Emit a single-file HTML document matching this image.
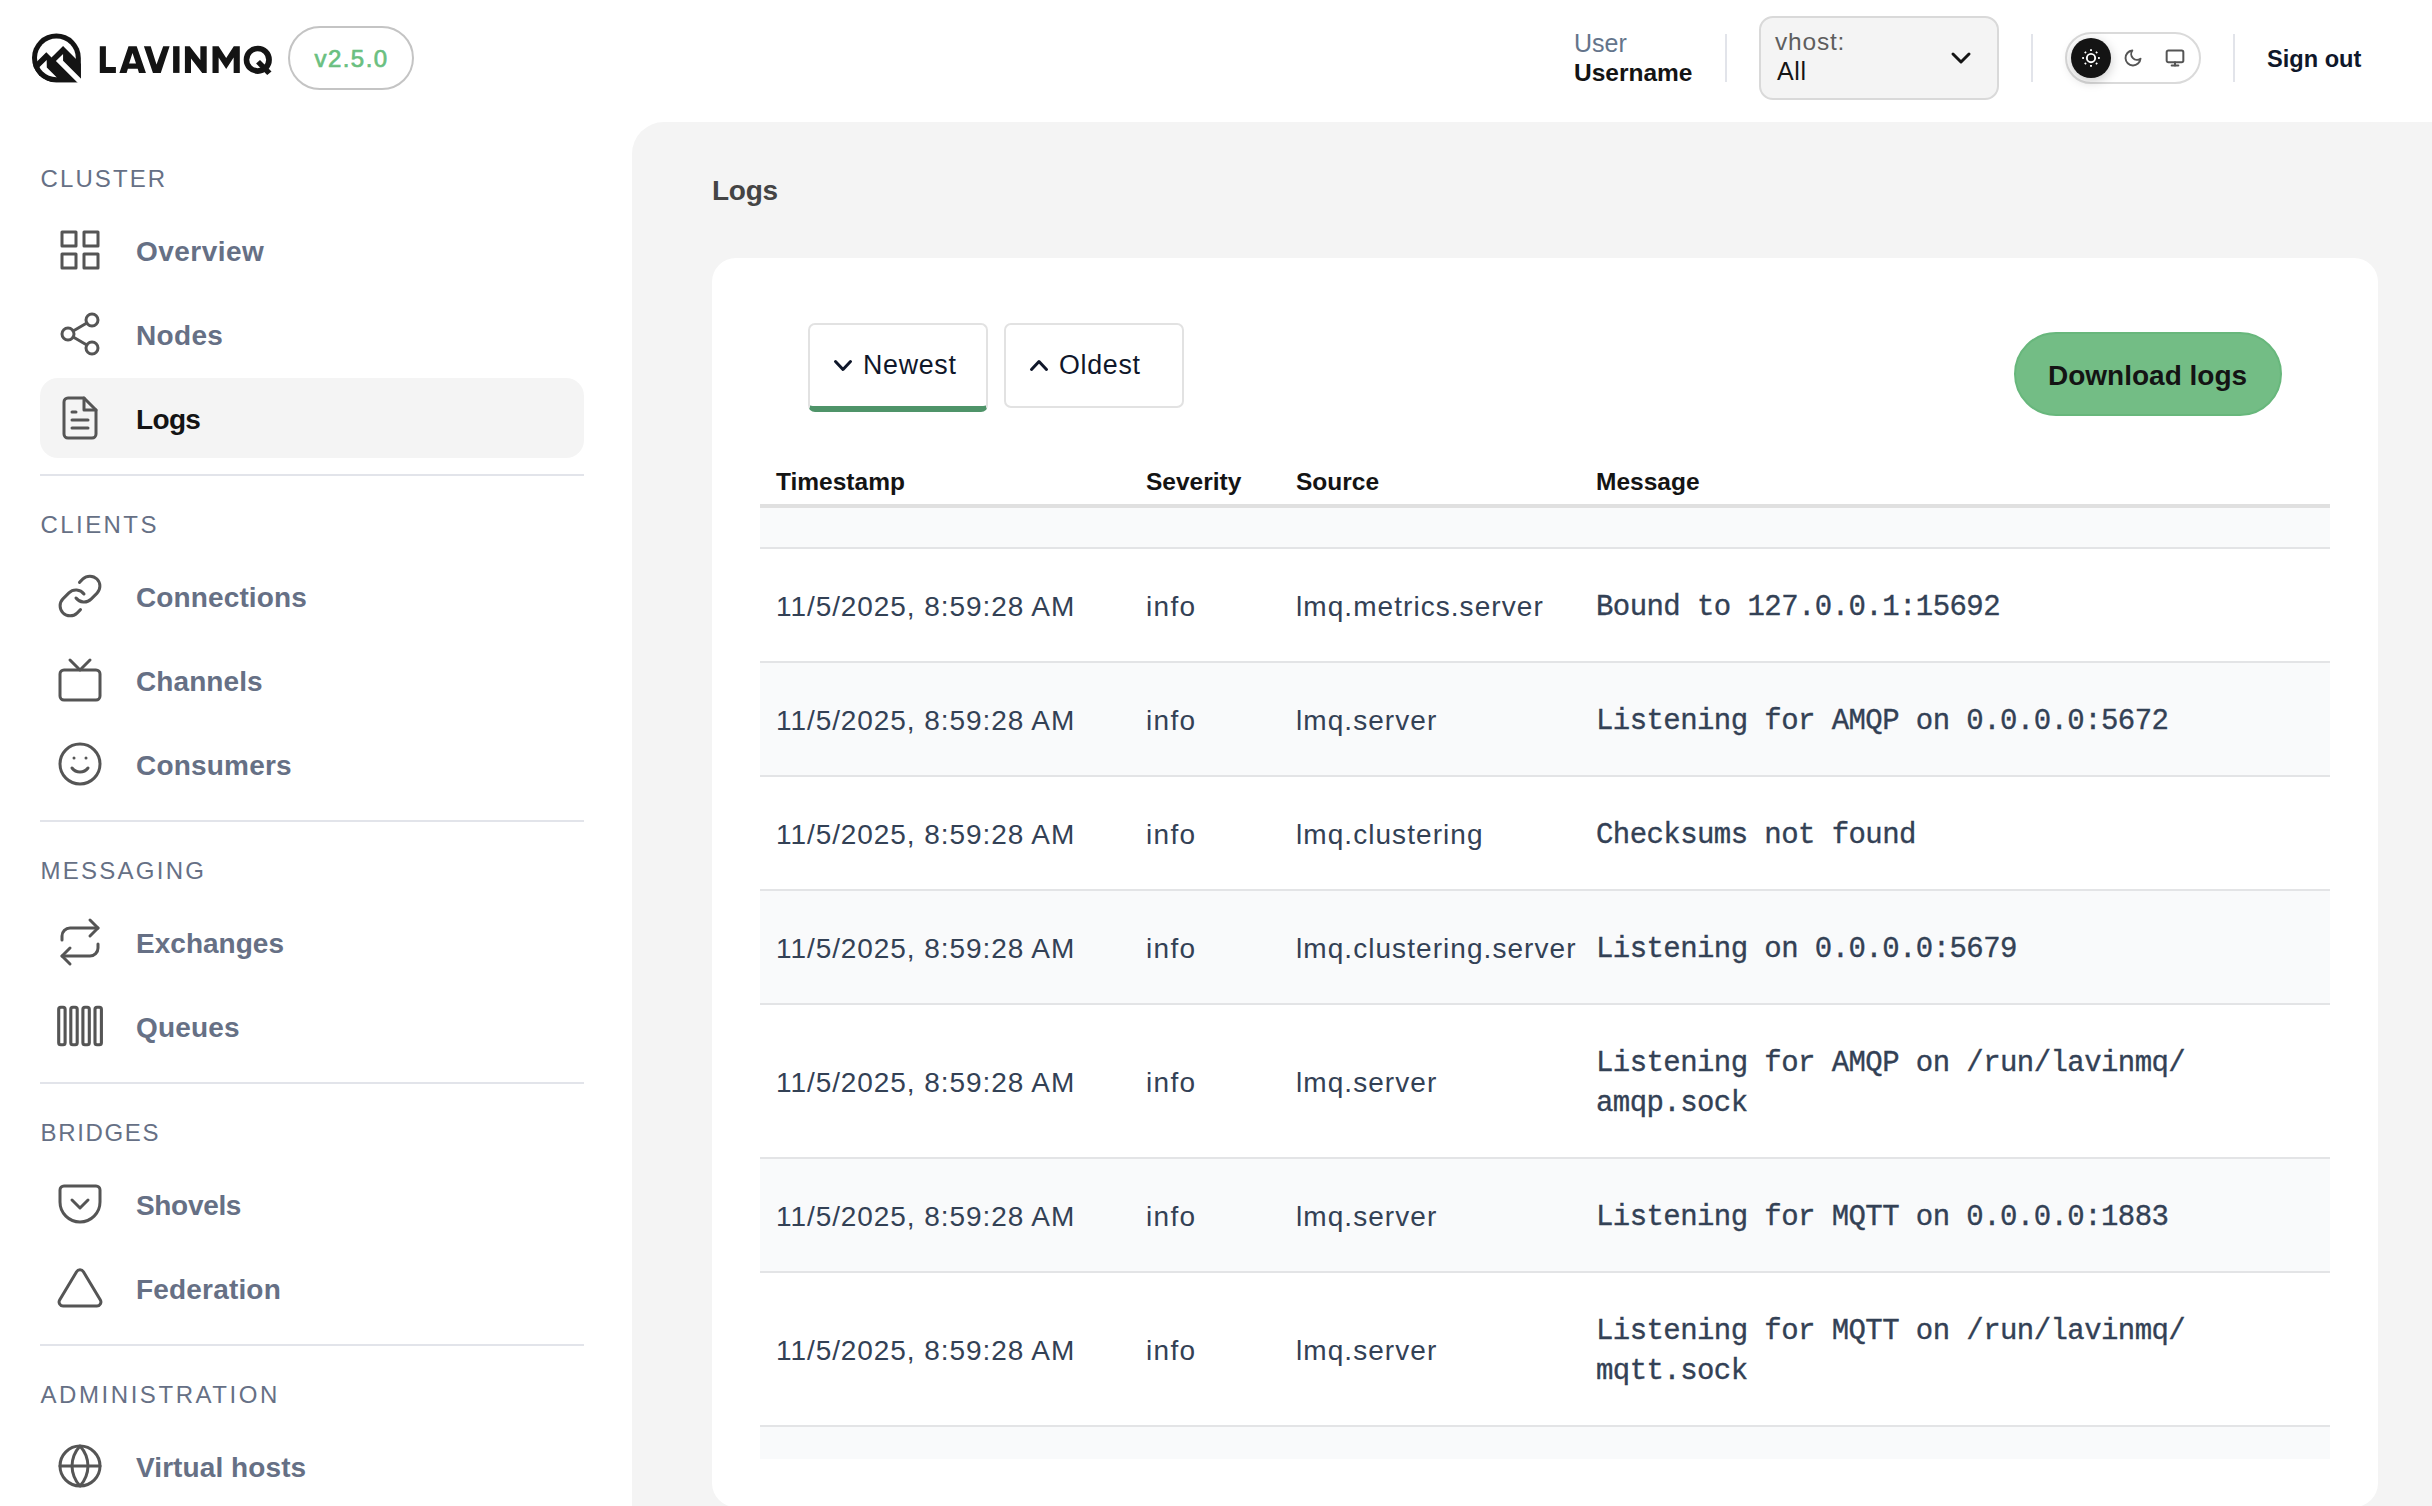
<!DOCTYPE html>
<html lang="en">
<head>
<meta charset="utf-8">
<title>LavinMQ - Logs</title>
<style>
*{box-sizing:border-box;margin:0;padding:0}
html,body{width:2432px;height:1506px;overflow:hidden;background:#fff}
body{font-family:"Liberation Sans",sans-serif;color:#141414;position:relative}
.abs{position:absolute}
.t{position:absolute;white-space:nowrap;line-height:1}
svg{position:absolute;overflow:visible}
.ico{fill:none;stroke:#555;stroke-width:1.5;stroke-linecap:round;stroke-linejoin:round;width:48px;height:48px;left:56px}
.sec{position:absolute;left:40.5px;font-size:24px;letter-spacing:2.1px;color:#667085;line-height:1;white-space:nowrap}
.nav{position:absolute;left:136px;font-size:28px;font-weight:bold;color:#667085;line-height:1;white-space:nowrap;letter-spacing:.45px}
.hr{position:absolute;left:40px;width:544px;height:2px;background:#e2e4ea}
.vsep{position:absolute;top:34px;width:2px;height:48px;background:#e2e4ea}
/* table */
.row{position:absolute;left:760px;width:1570px;border-bottom:2px solid #e3e4e6}
.row.alt{background:#f9fafb}
.c{position:absolute;font-size:28px;color:#334155;line-height:40px;white-space:nowrap}
.c1{left:16px;letter-spacing:.93px}
.c2{left:386px;letter-spacing:1.3px}
.c3{left:536px;letter-spacing:1.06px}
.c4{left:836px;font-family:"Liberation Mono",monospace;font-size:29px;letter-spacing:-.57px;-webkit-text-stroke:.35px #334155;margin-top:.5px}
.th{position:absolute;top:469.500px;font-size:24.500px;font-weight:bold;color:#141414;line-height:1;white-space:nowrap}
</style>
</head>
<body>

<!-- ================= HEADER ================= -->
<svg id="logo" style="left:30px;top:30px;width:60px;height:60px" viewBox="30 30 60 60">
  <defs>
    <clipPath id="outerclip"><path d="M32 57.9A24.4 24.4 0 0 1 80.800 57.9V82.300H56.400A24.400 24.400 0 0 1 32 57.900Z"/></clipPath>
    <clipPath id="innerclip"><circle cx="56.400" cy="57.900" r="19.400"/></clipPath>
  </defs>
  <path d="M32 57.900A24.400 24.400 0 0 1 80.800 57.900V82.300H56.400A24.400 24.400 0 0 1 32 57.900Z" fill="#141414"/>
  <circle cx="56.400" cy="57.900" r="19.400" fill="#fff"/>
  <g clip-path="url(#outerclip)">
    <polygon points="30,68.600 46.300,52.300 51.500,57.500 63.070,46.100 83,66 83,90 30,90" fill="#141414"/>
  </g>
  <g clip-path="url(#innerclip)">
    <polygon points="46.700,59.900 26.700,79.900 26.700,100 79.400,100 46.800,67.500" fill="#fff"/>
  </g>
  <polygon points="63.070,53.900 55.900,61 85.900,91 93.070,90.700 63.070,60.700" fill="#fff"/>
</svg>
<svg id="wordmark" style="left:96px;top:40px;width:184px;height:40px" viewBox="96 40 184 40" fill="#141414">
  <polygon points="99.800,46.200 105.900,46.200 105.900,67.050 115.900,67.050 115.900,72.900 99.800,72.900"/>
  <path fill-rule="evenodd" d="M128.500 46.200H136.700L145.960 72.900H138.970L137.700 68.800H127.900L126.600 72.900H119.400ZM132.500 53.100L129.100 63.400H136ZZ"/>
  <polygon points="143.900,46.200 150.700,46.200 156.500,64.500 163.200,46.200 169.600,46.200 160.760,72.900 152.950,72.900"/>
  <rect x="173.100" y="46.200" width="6.400" height="26.700"/>
  <polygon points="184.900,46.200 189.700,46.200 200.350,60.100 200.350,46.200 206.700,46.200 206.700,72.900 202.200,72.900 191,58.500 191,72.900 184.900,72.900"/>
  <polygon points="212.500,72.900 212.500,46.200 218.600,46.200 226.200,57.900 233.800,46.200 239.800,46.200 239.800,72.900 233.660,72.900 233.660,57.500 226.200,68.900 218.650,57.500 218.650,72.900"/>
  <path fill-rule="evenodd" d="M257.800 45.700a14.100 14.100 0 1 0 0 28.200a14.100 14.100 0 1 0 0-28.200ZM257.700 51.300a8.450 8.450 0 1 1 0 16.900a8.450 8.450 0 1 1 0-16.900Z"/>
  <polygon points="260,59.900 256.100,63.400 267.200,74.950 271.500,71.500"/>
</svg>

<div class="abs" style="left:288px;top:26px;width:126px;height:64px;border:2px solid #c4c4c4;border-radius:32px"></div>
<div class="t" style="left:314.600px;top:46.600px;font-size:24px;letter-spacing:1.420px;color:#6abf80;-webkit-text-stroke:.7px #6abf80">v2.5.0</div>

<div class="t" style="left:1574px;top:30.800px;font-size:25px;color:#64748b">User</div>
<div class="t" style="left:1574px;top:61.200px;font-size:24.500px;font-weight:bold;color:#141414">Username</div>
<div class="vsep" style="left:1725px"></div>

<div class="abs" style="left:1759px;top:16px;width:240px;height:84px;background:#f4f4f4;border:2px solid #d9d9d9;border-radius:14px"></div>
<div class="t" style="left:1775px;top:30px;font-size:24.500px;color:#5e5e5e;letter-spacing:.8px">vhost:</div>
<div class="t" style="left:1777px;top:58.500px;font-size:25px;color:#141414;letter-spacing:.6px">All</div>
<svg style="left:1949px;top:46px;width:24px;height:24px" viewBox="0 0 24 24" fill="none" stroke="#141414" stroke-width="3" stroke-linecap="round" stroke-linejoin="round"><polyline points="4,8 12,16 20,8"/></svg>
<div class="vsep" style="left:2031px"></div>

<!-- theme toggle -->
<div class="abs" style="left:2065px;top:32px;width:136px;height:52px;border:2px solid #dadada;border-radius:26px;"></div>
<div class="abs" style="left:2071px;top:38px;width:40px;height:40px;border-radius:50%;background:#141414;box-shadow:0 3px 12px rgba(0,0,0,.22)"></div>
<svg style="left:2081px;top:48px;width:20px;height:20px" viewBox="0 0 24 24" fill="none" stroke="#fff" stroke-width="2.300" stroke-linecap="butt" stroke-linejoin="round"><circle cx="12" cy="12" r="5"/><line x1="12" y1="1.500" x2="12" y2="3.500"/><line x1="12" y1="20.500" x2="12" y2="22.500"/><line x1="4.600" y1="4.600" x2="6" y2="6"/><line x1="18" y1="18" x2="19.400" y2="19.400"/><line x1="1.500" y1="12" x2="3.500" y2="12"/><line x1="20.500" y1="12" x2="22.500" y2="12"/><line x1="4.600" y1="19.400" x2="6" y2="18"/><line x1="18" y1="6" x2="19.400" y2="4.600"/></svg>
<svg style="left:2123px;top:48px;width:20px;height:20px" viewBox="0 0 24 24" fill="none" stroke="#555" stroke-width="2.300" stroke-linecap="round" stroke-linejoin="round"><path d="M21 12.790A9 9 0 1 1 11.210 3 7 7 0 0 0 21 12.790z"/></svg>
<svg style="left:2165px;top:48px;width:20px;height:20px" viewBox="0 0 24 24" fill="none" stroke="#555" stroke-width="2.400" stroke-linecap="round" stroke-linejoin="round"><rect x="2" y="3" width="20" height="14" rx="2" ry="2"/><line x1="8" y1="21" x2="16" y2="21"/><line x1="12" y1="17" x2="12" y2="21"/></svg>
<div class="vsep" style="left:2233px"></div>
<div class="t" style="left:2267px;top:48px;font-size:23.600px;font-weight:bold;color:#0f172a">Sign out</div>

<!-- ================= SIDEBAR ================= -->
<div id="sidebar">
<div class="sec" style="top:167.3px;letter-spacing:2.1px">CLUSTER</div>
<svg class="ico" style="top:225.6px" viewBox="0 0 24 24"><rect x="3" y="3" width="7" height="7"/><rect x="14" y="3" width="7" height="7"/><rect x="14" y="14" width="7" height="7"/><rect x="3" y="14" width="7" height="7"/></svg>
<div class="nav" style="top:238px;letter-spacing:0.46px">Overview</div>
<svg class="ico" style="top:309.6px" viewBox="0 0 24 24"><circle cx="18" cy="5" r="3"/><circle cx="6" cy="12" r="3"/><circle cx="18" cy="19" r="3"/><line x1="8.590" y1="13.510" x2="15.420" y2="17.490"/><line x1="15.410" y1="6.510" x2="8.590" y2="10.490"/></svg>
<div class="nav" style="top:322px;letter-spacing:0.32px">Nodes</div>
<div class="abs" style="left:40px;top:378px;width:544px;height:80px;background:#f4f4f4;border-radius:18px"></div>
<svg class="ico" style="top:393.6px" viewBox="0 0 24 24"><path d="M14 2H6a2 2 0 0 0-2 2v16a2 2 0 0 0 2 2h12a2 2 0 0 0 2-2V8z"/><polyline points="14 2 14 8 20 8"/><line x1="16" y1="13" x2="8" y2="13"/><line x1="16" y1="17" x2="8" y2="17"/><polyline points="10 9 9 9 8 9"/></svg>
<div class="nav" style="top:406px;color:#141414;letter-spacing:-0.65px">Logs</div>
<div class="hr" style="top:474px"></div>

<div class="sec" style="top:513.3px;letter-spacing:2.43px">CLIENTS</div>
<svg class="ico" style="top:571.5px" viewBox="0 0 24 24"><path d="M10 13a5 5 0 0 0 7.540.540l3-3a5 5 0 0 0-7.070-7.070l-1.720 1.710"/><path d="M14 11a5 5 0 0 0-7.540-.540l-3 3a5 5 0 0 0 7.070 7.070l1.710-1.710"/></svg>
<div class="nav" style="top:583.7px;letter-spacing:0.12px">Connections</div>
<svg class="ico" style="top:655.5px" viewBox="0 0 24 24"><rect x="2" y="7" width="20" height="15" rx="2" ry="2"/><polyline points="17 2 12 7 7 2"/></svg>
<div class="nav" style="top:667.7px;letter-spacing:0.09px">Channels</div>
<svg class="ico" style="top:739.5px" viewBox="0 0 24 24"><circle cx="12" cy="12" r="10"/><path d="M8 14s1.500 2 4 2 4-2 4-2"/><line x1="9" y1="9" x2="9.010" y2="9"/><line x1="15" y1="9" x2="15.010" y2="9"/></svg>
<div class="nav" style="top:751.7px;letter-spacing:0.19px">Consumers</div>
<div class="hr" style="top:820px"></div>

<div class="sec" style="top:859.3px;letter-spacing:2.26px">MESSAGING</div>
<svg class="ico" style="top:917.5px" viewBox="0 0 24 24"><polyline points="17 1 21 5 17 9"/><path d="M3 11V9a4 4 0 0 1 4-4h14"/><polyline points="7 23 3 19 7 15"/><path d="M21 13v2a4 4 0 0 1-4 4H3"/></svg>
<div class="nav" style="top:929.7px;letter-spacing:0.02px">Exchanges</div>
<svg class="ico" style="top:1001.5px;stroke-width:1.55" viewBox="0 0 24 24"><rect x="1.350" y="2.650" width="3.200" height="18.700" rx="1"/><rect x="7.400" y="2.650" width="3.200" height="18.700" rx="1"/><rect x="13.450" y="2.650" width="3.200" height="18.700" rx="1"/><rect x="19.500" y="2.650" width="3.200" height="18.700" rx="1"/></svg>
<div class="nav" style="top:1013.7px;letter-spacing:0.17px">Queues</div>
<div class="hr" style="top:1082px"></div>

<div class="sec" style="top:1121.3px;letter-spacing:1.65px">BRIDGES</div>
<svg class="ico" style="top:1179.5px" viewBox="0 0 24 24"><path d="M4 3h16a2 2 0 0 1 2 2v6a10 10 0 0 1-10 10A10 10 0 0 1 2 11V5a2 2 0 0 1 2-2z"/><polyline points="8 10 12 14 16 10"/></svg>
<div class="nav" style="top:1191.7px;letter-spacing:-0.33px">Shovels</div>
<svg class="ico" style="top:1263.5px" viewBox="0 0 24 24"><path d="M10.290 3.860L1.820 18a2 2 0 0 0 1.710 3h16.940a2 2 0 0 0 1.710-3L13.710 3.860a2 2 0 0 0-3.420 0z"/></svg>
<div class="nav" style="top:1275.7px;letter-spacing:0.18px">Federation</div>
<div class="hr" style="top:1344px"></div>

<div class="sec" style="top:1383.3px;letter-spacing:2.56px">ADMINISTRATION</div>
<svg class="ico" style="top:1441.5px" viewBox="0 0 24 24"><circle cx="12" cy="12" r="10"/><line x1="2" y1="12" x2="22" y2="12"/><path d="M12 2a15.300 15.300 0 0 1 4 10 15.300 15.300 0 0 1-4 10 15.300 15.300 0 0 1-4-10 15.300 15.300 0 0 1 4-10z"/></svg>
<div class="nav" style="top:1453.7px;letter-spacing:0.09px">Virtual hosts</div>
</div>

<!-- ================= MAIN ================= -->
<div class="abs" style="left:632px;top:122px;width:1800px;height:1400px;background:#f4f4f4;border-top-left-radius:32px"></div>
<div class="t" style="left:712px;top:176.700px;font-size:28px;letter-spacing:-.25px;font-weight:bold;color:#444">Logs</div>
<div class="abs" id="card" style="left:712px;top:258px;width:1666px;height:1249px;background:#fff;border-radius:24px"></div>

<!-- sort buttons -->
<div class="abs" style="left:808px;top:323px;width:180px;height:89px;border:2px solid #e2e2e2;border-bottom:6px solid #4f9469;border-radius:7px"></div>
<svg style="left:831px;top:354px;width:24px;height:24px" viewBox="0 0 24 24" fill="none" stroke="#0f172a" stroke-width="3" stroke-linecap="round" stroke-linejoin="round"><polyline points="4.500,7.500 12,15.500 19.500,7.500"/></svg>
<div class="t" style="left:863px;top:352px;font-size:26.800px;letter-spacing:.7px;color:#0f172a">Newest</div>
<div class="abs" style="left:1004px;top:323px;width:180px;height:85px;border:2px solid #e2e2e2;border-radius:7px"></div>
<svg style="left:1027px;top:354px;width:24px;height:24px" viewBox="0 0 24 24" fill="none" stroke="#0f172a" stroke-width="3" stroke-linecap="round" stroke-linejoin="round"><polyline points="4.500,15.500 12,7.500 19.500,15.500"/></svg>
<div class="t" style="left:1059px;top:352px;font-size:26.800px;letter-spacing:.7px;color:#0f172a">Oldest</div>

<div class="abs" style="left:2014px;top:332px;width:268px;height:84px;background:#73bd85;border:2px solid #68b77c;border-radius:42px"></div>
<div class="t" style="left:2048px;top:361.500px;font-size:28px;font-weight:bold;color:#141414">Download logs</div>

<!-- table header -->
<div class="th" style="left:776px">Timestamp</div>
<div class="th" style="left:1146px">Severity</div>
<div class="th" style="left:1296px">Source</div>
<div class="th" style="left:1596px">Message</div>
<div class="abs" style="left:760px;top:504px;width:1570px;height:4px;background:#e0e0e0"></div>
<div class="row alt" style="top:508px;height:41px"></div>
<div class="row" style="top:549px;height:114px"><div class="c c1" style="top:38px">11/5/2025, 8:59:28 AM</div><div class="c c2" style="top:38px">info</div><div class="c c3" style="top:38px">lmq.metrics.server</div><div class="c c4" style="top:38.3px">Bound to 127.0.0.1:15692</div></div>
<div class="row alt" style="top:663px;height:114px"><div class="c c1" style="top:38px">11/5/2025, 8:59:28 AM</div><div class="c c2" style="top:38px">info</div><div class="c c3" style="top:38px">lmq.server</div><div class="c c4" style="top:38.3px">Listening for AMQP on 0.0.0.0:5672</div></div>
<div class="row" style="top:777px;height:114px"><div class="c c1" style="top:38px">11/5/2025, 8:59:28 AM</div><div class="c c2" style="top:38px">info</div><div class="c c3" style="top:38px">lmq.clustering</div><div class="c c4" style="top:38.3px">Checksums not found</div></div>
<div class="row alt" style="top:891px;height:114px"><div class="c c1" style="top:38px">11/5/2025, 8:59:28 AM</div><div class="c c2" style="top:38px">info</div><div class="c c3" style="top:38px">lmq.clustering.server</div><div class="c c4" style="top:38.3px">Listening on 0.0.0.0:5679</div></div>
<div class="row" style="top:1005px;height:154px"><div class="c c1" style="top:58px">11/5/2025, 8:59:28 AM</div><div class="c c2" style="top:58px">info</div><div class="c c3" style="top:58px">lmq.server</div><div class="c c4" style="top:38.3px">Listening for AMQP on /run/lavinmq/<br>amqp.sock</div></div>
<div class="row alt" style="top:1159px;height:114px"><div class="c c1" style="top:38px">11/5/2025, 8:59:28 AM</div><div class="c c2" style="top:38px">info</div><div class="c c3" style="top:38px">lmq.server</div><div class="c c4" style="top:38.3px">Listening for MQTT on 0.0.0.0:1883</div></div>
<div class="row" style="top:1273px;height:154px"><div class="c c1" style="top:58px">11/5/2025, 8:59:28 AM</div><div class="c c2" style="top:58px">info</div><div class="c c3" style="top:58px">lmq.server</div><div class="c c4" style="top:38.3px">Listening for MQTT on /run/lavinmq/<br>mqtt.sock</div></div>
<div class="row alt" style="top:1427px;height:32px;border-bottom:none"></div>

</body>
</html>
